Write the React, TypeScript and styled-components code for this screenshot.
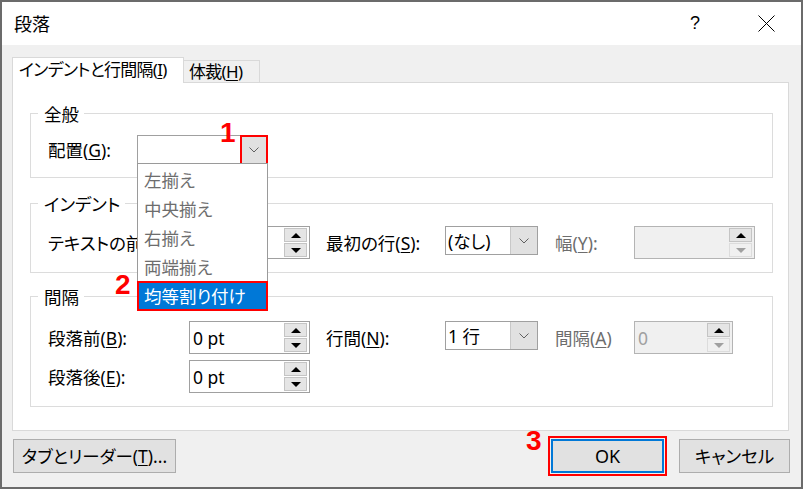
import React from "react";
import styled, { createGlobalStyle, css } from "styled-components";

const Global = createGlobalStyle`
  html, body { margin: 0; padding: 0; }
  body {
    background: #6b6b6b;
    font-family: "Noto Sans", "Noto Sans CJK JP", sans-serif;
    font-feature-settings: "palt";
    color: #000;
  }
`;

const FS = "17.5px";

const Dialog = styled.div`
  width: 799px;
  height: 485px;
  margin: 2px;
  background: #f0f0f0;
  display: flex;
  flex-direction: column;
  overflow: hidden;
`;

const TitleBar = styled.div`
  height: 43px;
  flex-shrink: 0;
  background: #fff;
  display: flex;
  align-items: center;
  padding: 0 12px 0 12px;
  gap: 25px;
`;

const Title = styled.span`
  flex: 1;
  font-size: 18px;
  line-height: 20px;
`;

const CaptionButton = styled.div`
  width: 46px;
  height: 43px;
  display: flex;
  align-items: center;
  justify-content: center;
  font-family: "Liberation Sans", sans-serif;
  font-size: 18px;
`;

const Body = styled.div`
  flex: 1;
  display: flex;
  flex-direction: column;
  padding: 12px 12px 0 10px;
`;

const TabStrip = styled.div`
  display: flex;
  align-items: flex-end;
  height: 25px;
  position: relative;
  z-index: 1;
`;

const Tab = styled.div<{ $active?: boolean; $w: number }>`
  box-sizing: border-box;
  width: ${(p) => p.$w}px;
  display: flex;
  align-items: center;
  font-size: 17px;
  letter-spacing: -0.7px;
  line-height: 20px;
  white-space: nowrap;
  border: 1px solid #d9d9d9;
  border-bottom: none;
  ${(p) =>
    p.$active
      ? css`
          height: 26px;
          margin-bottom: -1px;
          background: #fff;
          padding: 0 0 1px 6px;
        `
      : css`
          height: 22px;
          background: #f0f0f0;
          border-left: none;
          padding: 0 0 0 5px;
        `}
`;

const U = styled.u`
  text-decoration: underline;
  text-underline-offset: 2px;
  text-decoration-thickness: 1px;
`;

const Panel = styled.div`
  box-sizing: border-box;
  height: 349px;
  background: #fff;
  border: 1px solid #d9d9d9;
  padding: 30px 15px 0 17px;
  display: flex;
  flex-direction: column;
`;

const Group = styled.div<{ $h: number; $mt: number; $pt: number }>`
  position: relative;
  box-sizing: border-box;
  height: ${(p) => p.$h}px;
  margin-top: ${(p) => p.$mt}px;
  padding: ${(p) => p.$pt}px 0 0 17px;
  border: 1px solid #dcdcdc;
  display: flex;
  flex-direction: column;
  gap: 6px;
`;

const Legend = styled.span`
  position: absolute;
  left: 7px;
  top: -10px;
  padding: 0 5px 0 6px;
  background: #fff;
  font-size: ${FS};
  line-height: 20px;
`;

const Row = styled.div<{ $h: number }>`
  display: flex;
  align-items: center;
  height: ${(p) => p.$h}px;
`;

const Label = styled.span<{ $w: number; $ml?: number; $disabled?: boolean }>`
  flex-shrink: 0;
  width: ${(p) => p.$w}px;
  margin-left: ${(p) => p.$ml ?? 0}px;
  font-size: ${FS};
  line-height: 22px;
  white-space: nowrap;
  color: ${(p) => (p.$disabled ? "#6d6d6d" : "#000")};
`;

const Combo = styled.div<{ $w: number; $h?: number }>`
  position: relative;
  box-sizing: border-box;
  align-self: flex-start;
  width: ${(p) => p.$w}px;
  height: ${(p) => p.$h ?? 29}px;
  border: 1px solid #a0a0a0;
  background: #fff;
  display: flex;
`;

const ComboText = styled.span`
  flex: 1;
  padding-left: 2px;
  font-size: ${FS};
  line-height: 20px;
  display: flex;
  align-items: center;
  white-space: nowrap;
`;

const ComboArrow = styled.div`
  width: 26px;
  background: #e1e1e1;
  border-left: 1px solid #c8c8c8;
  display: flex;
  align-items: center;
  justify-content: center;
`;

const RedFrame = styled.span`
  position: absolute;
  top: -1px;
  right: -1px;
  width: 28px;
  bottom: -2px;
  box-sizing: border-box;
  border: 2px solid #ff0000;
  z-index: 3;
`;

const DropList = styled.div`
  position: absolute;
  top: 100%;
  left: -1px;
  width: 131px;
  box-sizing: border-box;
  border: 1px solid #9a9a9a;
  background: #fff;
  padding-top: 1px;
  z-index: 5;
`;

const DropItem = styled.div<{ $selected?: boolean }>`
  position: relative;
  height: 29px;
  padding-left: 6px;
  display: flex;
  align-items: center;
  font-size: ${FS};
  line-height: 20px;
  white-space: nowrap;
  color: ${(p) => (p.$selected ? "#fff" : "#6d6d6d")};
  background: ${(p) => (p.$selected ? "#0078d7" : "transparent")};
  ${(p) =>
    p.$selected &&
    css`
      &::after {
        content: "";
        position: absolute;
        left: -1px;
        right: -1px;
        top: 0;
        bottom: -1px;
        border: 2px solid #ff0000;
      }
    `}
`;

const Mark = styled.span<{ $left: number; $top: number }>`
  position: absolute;
  left: ${(p) => p.$left}px;
  top: ${(p) => p.$top}px;
  font-family: "Liberation Sans", Arial, sans-serif;
  font-weight: bold;
  font-size: 28px;
  line-height: 28px;
  color: #ff0000;
  z-index: 6;
`;

const Spin = styled.div<{ $w: number; $disabled?: boolean }>`
  box-sizing: border-box;
  width: ${(p) => p.$w}px;
  height: 33px;
  border: 1px solid ${(p) => (p.$disabled ? "#b4b4b4" : "#a0a0a0")};
  background: ${(p) => (p.$disabled ? "#f0f0f0" : "#fff")};
  display: flex;
  padding: 1px 2px 1px 0;
`;

const SpinText = styled.span<{ $disabled?: boolean }>`
  flex: 1;
  padding-left: 3px;
  display: flex;
  align-items: center;
  font-size: ${FS};
  line-height: 20px;
  color: ${(p) => (p.$disabled ? "#a0a0a0" : "#000")};
`;

const SpinButtons = styled.div`
  width: 23px;
  display: flex;
  flex-direction: column;
  gap: 1px;
`;

const SpinButton = styled.div<{ $disabled?: boolean }>`
  flex: 1;
  box-sizing: border-box;
  border: 1px solid ${(p) => (p.$disabled ? "#dcdcdc" : "#c4c4c4")};
  background: ${(p) => (p.$disabled ? "#f0f0f0" : "#e5e5e5")};
  display: flex;
  align-items: center;
  justify-content: center;
`;

const Tri = styled.span<{ $down?: boolean; $disabled?: boolean }>`
  width: 0;
  height: 0;
  border-left: 5px solid transparent;
  border-right: 5px solid transparent;
  ${(p) =>
    p.$down
      ? css`border-top: 5px solid ${p.$disabled ? "#a0a0a0" : "#000"};`
      : css`border-bottom: 5px solid ${p.$disabled ? "#a0a0a0" : "#000"};`}
`;

const Footer = styled.div`
  display: flex;
  align-items: flex-start;
  padding-top: 5px;
`;

const Button = styled.div<{ $w: number }>`
  box-sizing: border-box;
  width: ${(p) => p.$w}px;
  height: 34px;
  margin-top: 3px;
  background: #e1e1e1;
  border: 1px solid #adadad;
  display: flex;
  align-items: center;
  justify-content: center;
  font-size: ${FS};
  line-height: 20px;
  white-space: nowrap;
`;

const TabButton = styled(Button)`
  margin-left: 1px;
`;

const CancelButton = styled(Button)`
  margin-left: 12px;
  margin-right: -1px;
`;

const OkFrame = styled.div`
  position: relative;
  margin-left: auto;
  box-sizing: border-box;
  width: 119px;
  height: 40px;
  border: 2px solid #ff0000;
  padding: 1px;
`;

const OkButton = styled.div`
  box-sizing: border-box;
  height: 100%;
  background: #e1e1e1;
  border: 2px solid #0078d7;
  display: flex;
  align-items: center;
  justify-content: center;
  font-size: 18px;
  line-height: 20px;
`;

const Chevron = () => (
  <svg width="10" height="6" viewBox="0 0 10 6">
    <polyline points="0.5,0.5 5,5 9.5,0.5" fill="none" stroke="#606060" strokeWidth="1" />
  </svg>
);

const SpinBox = ({ w, text, disabled, downDisabled }: { w: number; text: string; disabled?: boolean; downDisabled?: boolean }) => (
  <Spin $w={w} $disabled={disabled}>
    <SpinText $disabled={disabled}>{text}</SpinText>
    <SpinButtons>
      <SpinButton>
        <Tri />
      </SpinButton>
      <SpinButton $disabled={downDisabled}>
        <Tri $down $disabled={downDisabled} />
      </SpinButton>
    </SpinButtons>
  </Spin>
);

const items = ["左揃え", "中央揃え", "右揃え", "両端揃え", "均等割り付け"];

export default function App() {
  return (
    <>
      <Global />
      <Dialog>
        <TitleBar>
          <Title>段落</Title>
          <CaptionButton>?</CaptionButton>
          <CaptionButton>
            <svg width="17" height="17" viewBox="0 0 17 17">
              <path d="M0.5 0.5 L16.5 16.5 M16.5 0.5 L0.5 16.5" stroke="#000" strokeWidth="1" />
            </svg>
          </CaptionButton>
        </TitleBar>
        <Body>
          <TabStrip>
            <Tab $active $w={172}>
              インデントと行間隔(<U>I</U>)
            </Tab>
            <Tab $w={76}>
              体裁(<U>H</U>)
            </Tab>
          </TabStrip>
          <Panel>
            <Group $h={65} $mt={0} $pt={21}>
              <Legend>全般</Legend>
              <Row $h={29}>
                <Label $w={89}>
                  配置(<U>G</U>):
                </Label>
                <Combo $w={131} $h={29}>
                  <ComboText />
                  <ComboArrow>
                    <Chevron />
                  </ComboArrow>
                  <RedFrame />
                  <Mark $left={82} $top={-17}>1</Mark>
                  <DropList>
                    {items.map((t, i) => (
                      <DropItem key={t} $selected={i === items.length - 1}>
                        {t}
                        {i === items.length - 1 && <Mark $left={-23} $top={-10}>2</Mark>}
                      </DropItem>
                    ))}
                  </DropList>
                </Combo>
              </Row>
            </Group>
            <Group $h={70} $mt={25} $pt={22}>
              <Legend>インデント</Legend>
              <Row $h={33}>
                <Label $w={141}>テキストの前</Label>
                <SpinBox w={121} text="" />
                <Label $w={119} $ml={16}>
                  最初の行(<U>S</U>):
                </Label>
                <Combo $w={93}>
                  <ComboText>(なし)</ComboText>
                  <ComboArrow>
                    <Chevron />
                  </ComboArrow>
                </Combo>
                <Label $w={79} $ml={17} $disabled>
                  幅(<U>Y</U>):
                </Label>
                <SpinBox w={121} text="" disabled downDisabled />
              </Row>
            </Group>
            <Group $h={111} $mt={23} $pt={24}>
              <Legend>間隔</Legend>
              <Row $h={33}>
                <Label $w={141}>
                  段落前(<U>B</U>):
                </Label>
                <SpinBox w={121} text="0 pt" />
                <Label $w={119} $ml={16}>
                  行間(<U>N</U>):
                </Label>
                <Combo $w={93}>
                  <ComboText>1 行</ComboText>
                  <ComboArrow>
                    <Chevron />
                  </ComboArrow>
                </Combo>
                <Label $w={79} $ml={17} $disabled>
                  間隔(<U>A</U>)
                </Label>
                <SpinBox w={99} text="0" disabled downDisabled />
              </Row>
              <Row $h={33}>
                <Label $w={141}>
                  段落後(<U>E</U>):
                </Label>
                <SpinBox w={121} text="0 pt" />
              </Row>
            </Group>
          </Panel>
          <Footer>
            <TabButton $w={163}>
              タブとリーダー(<U>T</U>)...
            </TabButton>
            <OkFrame>
              <Mark $left={-24} $top={-11}>3</Mark>
              <OkButton>OK</OkButton>
            </OkFrame>
            <CancelButton $w={111}>キャンセル</CancelButton>
          </Footer>
        </Body>
      </Dialog>
    </>
  );
}
